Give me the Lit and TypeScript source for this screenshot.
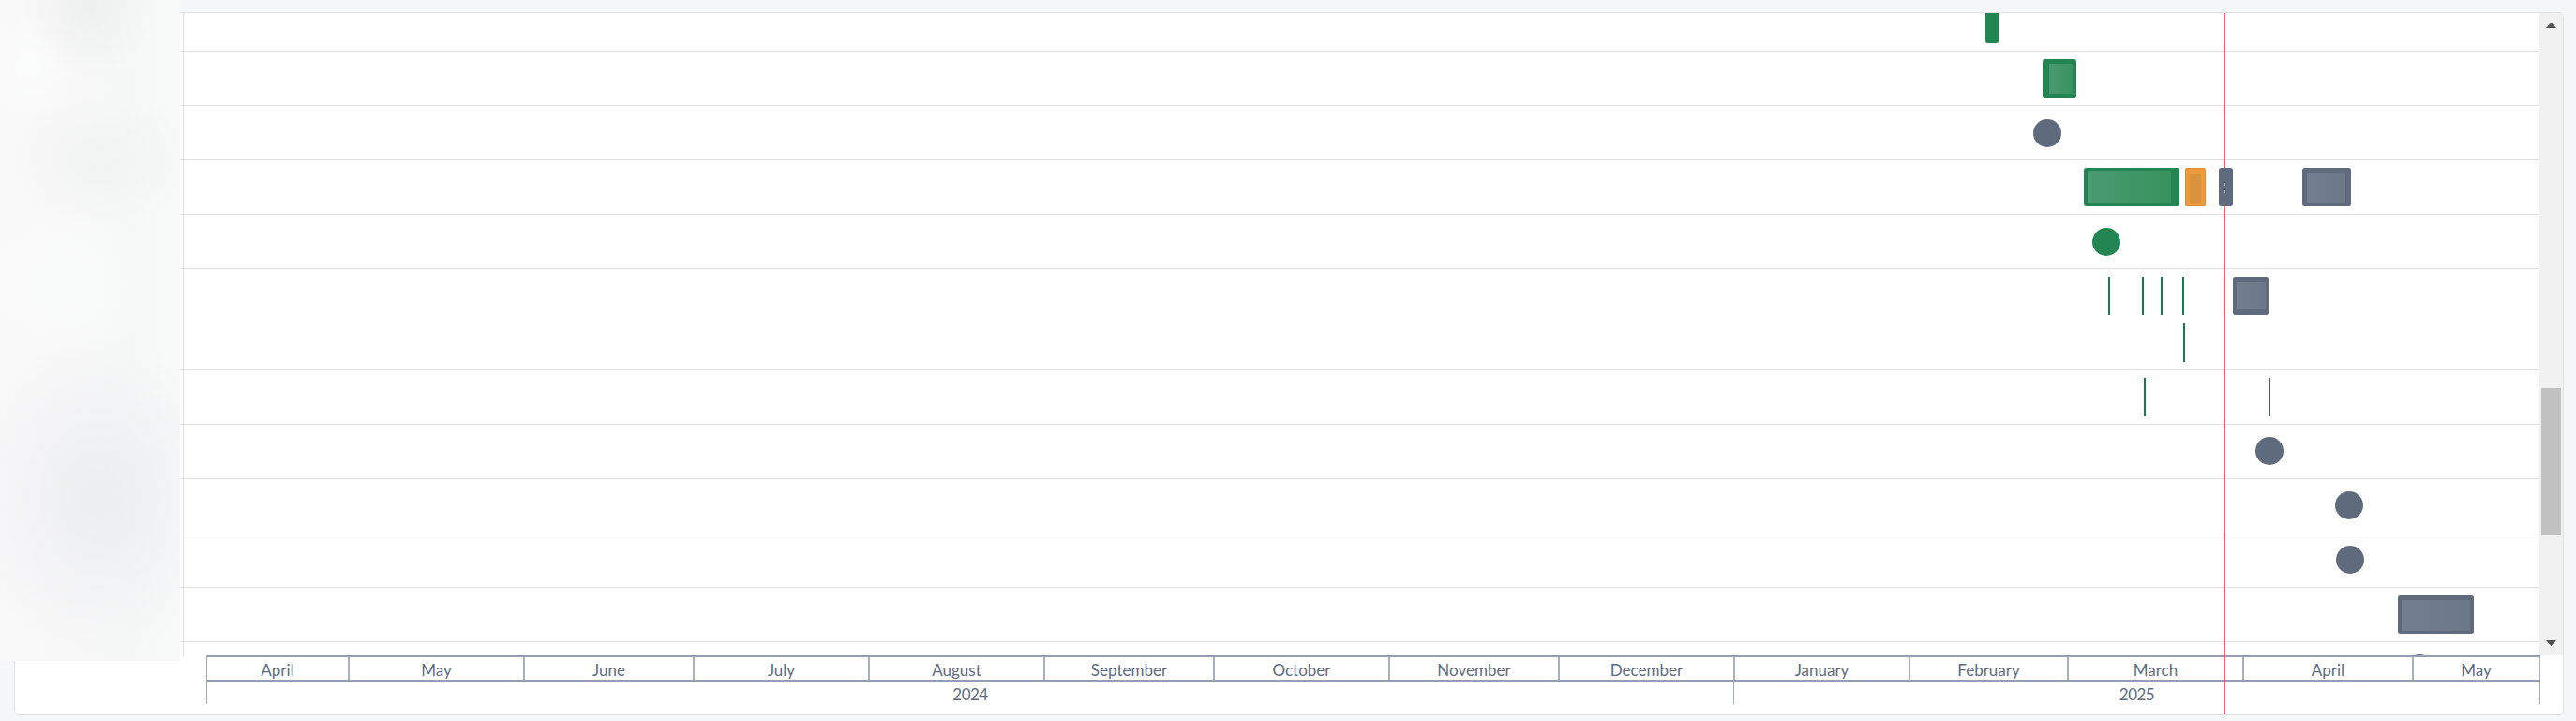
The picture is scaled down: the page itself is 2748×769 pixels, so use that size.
import { LitElement, html, css } from "lit";
import { customElement } from "lit/decorators.js";

const ORIGIN_X = 196;

type Mark = { k: string; x: number; x2: number; y: number; y2: number; inner?: number[]; dots?: boolean };

const green = "g", gray = "s", orange = "o";

const circle = (k: string, x: number, y: number): Mark => ({ k: "c" + k, x, x2: x + 30, y, y2: y + 30 });
const tick = (k: string, x: number, y: number): Mark => ({ k: "t" + k, x, x2: x + 2, y, y2: y + 41 });

const rows: { h: number; marks: Mark[] }[] = [
  { h: 41, marks: [{ k: green, x: 2118, x2: 2132, y: -20, y2: 46 }] },
  { h: 58, marks: [{ k: green, x: 2179, x2: 2215, y: 63, y2: 104, inner: [2186, 2211, 68, 100] }] },
  { h: 58, marks: [circle(gray, 2169, 127)] },
  {
    h: 58,
    marks: [
      { k: green, x: 2223, x2: 2325, y: 179, y2: 220, inner: [2227, 2316, 182, 216] },
      { k: orange, x: 2331, x2: 2353, y: 179, y2: 220, inner: [2336, 2348, 186, 216] },
      { k: gray, x: 2367, x2: 2382, y: 179, y2: 220, dots: true },
      { k: gray, x: 2456, x2: 2508, y: 179, y2: 220, inner: [2461, 2502, 184, 216] },
    ],
  },
  { h: 58, marks: [circle(green, 2232, 243)] },
  {
    h: 108,
    marks: [
      tick(green, 2249, 295),
      tick(green, 2285, 295),
      tick(green, 2305, 295),
      tick(green, 2328, 295),
      { k: gray, x: 2382, x2: 2420, y: 295, y2: 336, inner: [2386, 2417, 301, 330] },
      tick(green, 2329, 345),
    ],
  },
  { h: 58, marks: [tick(green, 2287, 403), tick(gray, 2420, 403)] },
  { h: 58, marks: [circle(gray, 2406, 466)] },
  { h: 58, marks: [circle(gray, 2491, 524)] },
  { h: 58, marks: [circle(gray, 2492, 582)] },
  { h: 58, marks: [{ k: gray, x: 2558, x2: 2639, y: 635, y2: 676, inner: [2562, 2634.5, 640, 673] }] },
  { h: 58, marks: [circle(gray, 2566, 698)] },
];

const monthNames = [
  "April", "May", "June", "July", "August", "September", "October", "November", "December",
  "January", "February", "March", "April", "May",
];
const ticks = [220, 372, 559, 740, 927, 1114, 1295, 1482, 1663, 1850, 2037, 2206, 2393, 2574, 2710];

@customElement("app-root")
export class AppRoot extends LitElement {
  static styles = css`
    :host {
      display: block;
      width: 2748px;
      height: 769px;
      overflow: hidden;
      box-sizing: border-box;
      padding: 13px 0 0 15px;
      background: #f6f7f9;
      font-family: "Lato", "Noto Sans", sans-serif;
    }
    .card {
      position: relative;
      box-sizing: border-box;
      width: 2720px;
      height: 750px;
      background: #fff;
      border: 1px solid #dfe1e3;
      border-radius: 5px;
      display: flex;
      flex-direction: column;
    }
    .scroller {
      display: flex;
      height: 685px;
      flex: none;
    }
    .rows {
      flex: 1;
      min-width: 0;
      overflow: hidden;
    }
    .row {
      box-sizing: border-box;
      display: flex;
      border-bottom: 1px solid #dfe0e2;
    }
    .gutter {
      width: 179px;
      flex: none;
      border-right: 1px solid #dfe0e2;
    }
    .track {
      position: relative;
      flex: 1;
    }
    .mark {
      position: absolute;
      z-index: 2;
      box-sizing: border-box;
      border-radius: 2.5px;
    }
    .g { background: #238551; }
    .s { background: #5f6b7c; }
    .o { background: #ec9a3c; box-shadow: inset 0 0 0 1px #d88e3a; }
    .cg, .cs { border-radius: 50%; }
    .cg { background: #238551; }
    .cs { background: #5f6b7c; }
    .tg, .ts { border-radius: 0; }
    .tg { background: #1c7a4a; }
    .ts { background: #4f5b6c; }
    .inner { position: absolute; }
    .g .inner { background: linear-gradient(90deg, #4a9b70, #38925f); }
    .o .inner { background: #d9933a; }
    .s .inner { background: linear-gradient(90deg, #737f8e, #6c7888); }
    .dots {
      position: absolute;
      left: 6px;
      top: 16px;
      width: 1px;
      height: 3px;
      background: #aab1bb;
      box-shadow: 0 8px 0 #aab1bb;
    }
    .scrollbar {
      position: relative;
      width: 25px;
      flex: none;
      background: #f1f1f1;
    }
    .thumb {
      position: absolute;
      left: 2px;
      right: 2px;
      top: 400px;
      height: 157px;
      background: #c1c1c1;
    }
    .arrow {
      position: absolute;
      left: 7px;
      width: 11px;
      height: 6px;
      fill: #505050;
    }
    .arrow.up { top: 10px; }
    .arrow.down { bottom: 10px; }
    .axis {
      margin-left: 204px;
      width: 2490px;
      font-size: 17px;
      color: #5f6b7c;
      text-align: center;
    }
    .axis-row {
      display: flex;
      box-sizing: border-box;
      border-left: 1px solid #a3abb8;
    }
    .months {
      height: 28px;
      border-top: 2px solid #949eae;
      border-bottom: 2px solid #949eae;
      line-height: 28px;
    }
    .months .cell {
      border-right: 2px solid #a9b0bc;
    }
    .years {
      height: 24px;
      line-height: 28px;
    }
    .years .cell {
      letter-spacing: -0.5px;
    }
    .cell {
      box-sizing: border-box;
      flex: none;
      border-right: 1px solid #a3abb8;
      white-space: nowrap;
    }
    .today {
      position: absolute;
      z-index: 1;
      left: 2356px;
      top: 0;
      bottom: 0;
      width: 2px;
      background: #e0656d;
    }
    .mask {
      position: absolute;
      z-index: 5;
      left: 0;
      top: 0;
      width: 192px;
      height: 705px;
      overflow: hidden;
      background:
        radial-gradient(ellipse 70px 80px at 95px 5px, #eeefef 0%, rgba(238,239,239,0) 100%),
        radial-gradient(ellipse 50px 60px at 30px 70px, #fbfcfc 0%, rgba(251,252,252,0) 100%),
        radial-gradient(ellipse 100px 70px at 110px 170px, #f1f2f2 0%, rgba(241,242,242,0) 100%),
        radial-gradient(ellipse 145px 170px at 105px 530px, #ecedee 0%, rgba(236,237,238,0) 100%),
        radial-gradient(ellipse 90px 90px at 70px 300px, #fafbfb 0%, rgba(250,251,251,0) 100%),
        linear-gradient(90deg, #f9f9fa, #f6f7f7 70%, #f8f9f9);
    }
  `;

  render() {
    let top = 14;
    return html`
      <div class="card">
        <div class="scroller">
          <div class="rows">
            ${rows.map((r) => {
              const rowTop = top;
              top += r.h;
              return html`
                <div class="row" style="height:${r.h}px">
                  <div class="gutter"></div>
                  <div class="track">
                    ${r.marks.map(
                      (m) => html`
                        <div
                          class="mark ${m.k}"
                          style="left:${m.x - ORIGIN_X}px;top:${m.y - rowTop}px;width:${m.x2 - m.x}px;height:${m.y2 - m.y}px"
                        >
                          ${m.inner
                            ? html`<div
                                class="inner"
                                style="left:${m.inner[0] - m.x}px;top:${m.inner[2] - m.y}px;width:${m.inner[1] - m.inner[0]}px;height:${m.inner[3] - m.inner[2]}px"
                              ></div>`
                            : ""}
                          ${m.dots ? html`<div class="dots"></div>` : ""}
                        </div>
                      `
                    )}
                  </div>
                </div>
              `;
            })}
          </div>
          <div class="scrollbar">
            <svg class="arrow up" viewBox="0 0 11 6"><path d="M5.5 0L11 6H0z" /></svg>
            <div class="thumb"></div>
            <svg class="arrow down" viewBox="0 0 11 6"><path d="M0 0H11L5.5 6z" /></svg>
          </div>
        </div>
        <div class="axis">
          <div class="axis-row months">
            ${monthNames.map((n, i) => {
              const w = ticks[i + 1] - ticks[i] - (i === monthNames.length - 1 ? 1 : 0);
              return html`<div class="cell" style="width:${w}px">${n}</div>`;
            })}
          </div>
          <div class="axis-row years">
            <div class="cell" style="width:1629px">2024</div>
            <div class="cell" style="width:860px">2025</div>
          </div>
        </div>
        <div class="today"></div>
      </div>
      <div class="mask"></div>
    `;
  }
}
